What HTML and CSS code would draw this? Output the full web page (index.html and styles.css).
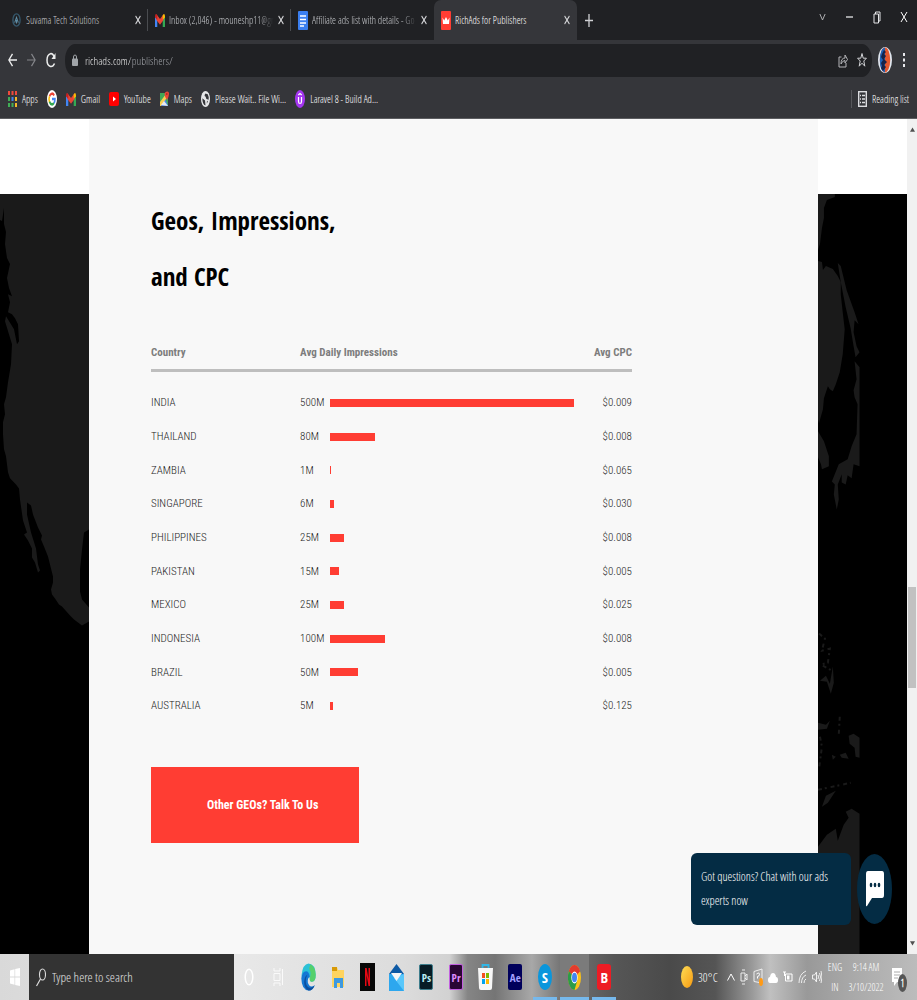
FILE: index.html
```html
<!DOCTYPE html>
<html lang="en">
<head>
<meta charset="utf-8">
<meta name="viewport" content="width=device-width, initial-scale=1">
<title>RichAds for Publishers</title>
<link rel="stylesheet" href="styles.css">
</head>
<body>
<svg class="defs" width="0" height="0" aria-hidden="true">
  <symbol id="close" viewBox="0 0 10 10" preserveAspectRatio="none"><path d="M1 1l8 8M9 1L1 9" stroke="currentColor" stroke-width="1.7" fill="none"/></symbol>
  <symbol id="close-thin" viewBox="0 0 8 12"><path d="M1 1l6 10M7 1L1 11" stroke="currentColor" fill="none"/></symbol>
  <symbol id="gmail" viewBox="0 0 24 18" preserveAspectRatio="none"><path fill="#4285f4" d="M0 3v15h5.500V7z"/><path fill="#34a853" d="M24 3v15h-5.500V7z"/><path fill="#ea4335" d="M3 0l9 7 9-7v8l-9 7-9-7z"/><path fill="#c5221f" d="M0 3q0-3 3-3l2.500 2v6L0 5z"/><path fill="#fbbc04" d="M24 3q0-3-3-3l-2.500 2v6L24 5z"/></symbol>
</svg>

<header class="browser">
  <div class="tabs">
    <div class="tab">
      <svg class="tab-icon small" viewBox="0 0 10 16" preserveAspectRatio="none"><ellipse cx="5" cy="8" rx="4" ry="7" fill="none" stroke="#35586c" stroke-width="1.500"/><path d="M3 11l2-6 2 6M5 8v4" fill="none" stroke="#5e8ba3" stroke-width="1.200"/></svg>
      <span class="tab-title">Suvama Tech Solutions</span>
      <button class="icon-button" aria-label="Close tab"><svg class="x"><use href="#close"/></svg></button>
    </div>
    <div class="tab">
      <svg class="tab-icon gm"><use href="#gmail"/></svg>
      <span class="tab-title fade">Inbox (2,046) - mouneshp11@gr</span>
      <button class="icon-button" aria-label="Close tab"><svg class="x"><use href="#close"/></svg></button>
    </div>
    <div class="tab">
      <svg class="tab-icon" viewBox="0 0 10 19" preserveAspectRatio="none"><rect width="10" height="19" rx="1" fill="#3b7ff0"/><path d="M2 5h6M2 8.500h6M2 12h6M2 15h4" stroke="#fff" stroke-width="1.600"/></svg>
      <span class="tab-title fade">Affiliate ads list with details - Go</span>
      <button class="icon-button" aria-label="Close tab"><svg class="x"><use href="#close"/></svg></button>
    </div>
    <div class="tab active">
      <svg class="tab-icon" viewBox="0 0 10 19" preserveAspectRatio="none"><rect width="10" height="19" rx="1" fill="#ff3d33"/><path d="M1.500 6.500l1.700 3L5 6l1.800 3.500 1.700-3-.5 6.500H2z" fill="#fff"/></svg>
      <span class="tab-title">RichAds for Publishers</span>
      <button class="icon-button" aria-label="Close tab"><svg class="x"><use href="#close"/></svg></button>
    </div>
    <button class="icon-button new-tab" aria-label="New tab"><svg viewBox="0 0 8 13" width="8" height="13" preserveAspectRatio="none"><path d="M4 0v13M0 6.500h8" stroke="#d0d1d4" stroke-width="1.300"/></svg></button>
    <div class="window-controls">
      <button class="icon-button" aria-label="Search tabs"><svg viewBox="0 0 8 8" width="7" height="8" preserveAspectRatio="none"><path d="M1 1l3 6 3-6" fill="none" stroke="#b5b6b9"/></svg></button>
      <button class="icon-button" aria-label="Minimize"><svg viewBox="0 0 8 8" width="7" height="8"><path d="M0 4h8" stroke="#e4e5e7" stroke-width="1.500"/></svg></button>
      <button class="icon-button" aria-label="Restore"><svg viewBox="0 0 8 13" width="8" height="13"><path d="M1 3h4.500v9H1zM2.500 3V1H7v9H5.500" fill="none" stroke="#e4e5e7"/></svg></button>
      <button class="icon-button" aria-label="Close window"><svg width="8" height="12"><use href="#close-thin"/></svg></button>
    </div>
  </div>

  <div class="toolbar">
    <button class="icon-button" aria-label="Back"><svg viewBox="0 0 10 16" width="9" height="14" preserveAspectRatio="none"><path d="M10 8H1M5 1L1 8l4 7" fill="none" stroke="#eceded" stroke-width="1.500"/></svg></button>
    <button class="icon-button" aria-label="Forward"><svg viewBox="0 0 10 16" width="9" height="14" preserveAspectRatio="none"><path d="M0 8h9M5 1l4 7-4 7" fill="none" stroke="#85868a" stroke-width="1.300"/></svg></button>
    <button class="icon-button" aria-label="Reload"><svg viewBox="0 0 10 16" width="10" height="16" preserveAspectRatio="none"><path d="M8.500 11.500Q7 15 4.500 14.500 1 13.500 1 8t4-6.500Q7 1.500 8.500 5.500" fill="none" stroke="#eceded" stroke-width="1.500"/><path d="M9.500 1v6H5.500z" fill="#eceded"/></svg></button>
    <div class="omnibox">
      <svg viewBox="0 0 6 12" width="6" height="12"><rect y="4.500" width="6" height="7.500" rx="1" fill="#a0a4a8"/><path d="M1.500 5V3q0-2 1.500-2t1.500 2v2" fill="none" stroke="#a0a4a8"/></svg>
      <input class="url" type="text" value="richads.com/publishers/" aria-label="Address">
      <button class="icon-button" aria-label="Share"><svg viewBox="0 0 10 16" width="10" height="16"><path d="M3.500 5H1v10h7v-4M3 12q0-6 4-6V3l2.500 4.500L7 11V8.500Q4.500 8.500 3 12z" fill="none" stroke="#b4b5b8"/></svg></button>
      <button class="icon-button" aria-label="Bookmark"><svg viewBox="0 0 10 16" width="10" height="16"><path d="M5 1.500l1.200 4.700h3.200L6.800 9l1 5.200L5 11.200l-2.800 3 1-5.200L.6 6.200h3.200z" fill="none" stroke="#d0d1d4"/></svg></button>
    </div>
    <button class="icon-button" aria-label="Profile"><svg viewBox="0 0 14 26" width="14" height="26"><ellipse cx="7" cy="13" rx="7" ry="13" fill="#dfe6ee"/><ellipse cx="7" cy="13" rx="5.200" ry="12.500" fill="#e4572e"/><path d="M7 .5Q1.800 2 1.800 13T7 25.500z" fill="#1d63b8"/><path d="M6 3l2 2-2 2 2 2-2 3 3 3-3 3 2 2-3 4-2-3 1-2-1-3 2-3-2-3 1-3z" fill="#182348"/></svg></button>
    <button class="icon-button dots" aria-label="Menu"><svg viewBox="0 0 4 16" width="4" height="16"><path d="M1 1h2v3H1zM1 6.500h2v3H1zM1 12h2v3H1z" fill="#e8e9ec"/></svg></button>
  </div>

  <nav class="bookmarks" aria-label="Bookmarks">
    <a href="#apps"><svg viewBox="0 0 9 16" width="9" height="16"><path d="M0 0h2v4H0zM3.500 0h2v4h-2zM7 0h2v4H7z" fill="#f04a3c"/><path d="M0 6h2v4H0z" fill="#41ad56"/><path d="M3.500 6h2v4h-2z" fill="#3e82ec"/><path d="M7 6h2v4H7z" fill="#f4b92a"/><path d="M0 12h2v4H0zM3.500 12h2v4h-2z" fill="#41ad56"/><path d="M7 12h2v4H7z" fill="#f4b92a"/></svg>Apps</a>
    <a href="#google" aria-label="Google"><svg viewBox="0 0 20 20" width="10" height="18" preserveAspectRatio="none"><circle cx="10" cy="10" r="10" fill="#fff"/><g fill="none" stroke-width="3"><path d="M14.500 6A6 6 0 0 0 5 7" stroke="#ea4335"/><path d="M5 7a6 6 0 0 0 0 6.500" stroke="#fbbc05"/><path d="M5 13a6 6 0 0 0 9 1.500" stroke="#34a853"/><path d="M14 14.500A6 6 0 0 0 16 10h-6" stroke="#4285f4"/></g></svg></a>
    <a href="#gmail-page"><svg width="10" height="13"><use href="#gmail"/></svg>Gmail</a>
    <a href="#youtube"><svg viewBox="0 0 10 14" width="10" height="14"><rect width="10" height="14" rx="2" fill="#f00"/><path d="M4 4.500v5L7 7z" fill="#fff"/></svg>YouTube</a>
    <a href="#maps"><svg viewBox="0 0 9 16" width="9" height="16"><path d="M0 2h8v13H0z" fill="#3fa757"/><path d="M0 15l5-8 3 8z" fill="#4a86ea"/><path d="M0 11l6-8 2 2-7 10H0z" fill="#f7cf50"/><path d="M1 14l3-4 4 5z" fill="#e8eaed"/><path d="M7 9Q4.500 5 4.500 3T6.800.500 9 3t-2 6z" fill="#e84436"/><circle cx="6.800" cy="3" r=".8" fill="#8e1c16"/></svg>Maps</a>
    <a href="#wait"><svg viewBox="0 0 20 20" width="9" height="16" preserveAspectRatio="none"><circle cx="10" cy="10" r="10" fill="#e6e7e9"/><path d="M3 9l6 3 1 6q-7-1-7-9zM10 3q-4 3 0 4l2 3 5 1q1-4-2-7zM13 13l3-1-3 4z" fill="#35363a"/></svg>Please Wait.. File Wi...</a>
    <a href="#laravel"><svg viewBox="0 0 10 18" width="10" height="18"><ellipse cx="5" cy="9" rx="5" ry="9" fill="#a435f0"/><path d="M3.500 7v4.500q0 2 1.500 2t1.500-2V7M3.300 5L5 3.500 6.700 5" fill="none" stroke="#fff" stroke-width="1.200"/></svg>Laravel 8 - Build Ad...</a>
    <a class="reading" href="#reading"><svg viewBox="0 0 9 16" width="9" height="16"><rect x=".7" y=".7" width="7.600" height="14.600" fill="none" stroke="#dcdde0" stroke-width="1.400"/><path d="M2 4.500h1M4 4.500h3M2 8h1M4 8h3M2 11.500h1M4 11.500h3" stroke="#dcdde0" stroke-width="1.500"/></svg>Reading list</a>
  </nav>
</header>

<main class="viewport">
  <div class="page">
    <div class="gutter">
      <svg class="map" viewBox="0 0 89 759" preserveAspectRatio="none"><path fill="#1a1a1a" d="M0 0H89V335L84 338 82 355 80 375V397L82 405 89 413V427L82 431 74 425 70 421 62 412 59 410 55 404 52 400 51 395 53 388V382L50 370 48 362 44 352 41 345 42 341 38 333 33 320 31 311 27 308V320L31 338 36 354 38 370 40 376 38 378 35 368 32 363V354L28 346 24 340 27 338 23 326 20 305 19 294 16 290 10 284 8 278 7 270 6 262 4 255 3 240V228L5 220 4 210 6 203 8 188 11 170 12 150 5 127 6 122 14 135 17 150 19 147 18 130 15 124 12 120 8 118 10 108 8 100 12 102 9 94 7 84 10 70 7 64 5 50 6 38 4 30V14L2 27 0 26Z"/></svg>
    </div>
    <section class="panel">
      <h1>Geos, Impressions,<br>and CPC</h1>
      <table class="geos">
        <thead><tr><th class="country">Country</th><th class="imp">Avg Daily Impressions</th><th class="cpc">Avg CPC</th></tr></thead>
        <tbody>
          <tr><td>INDIA</td><td><div class="meter"><span>500M</span><i style="width:100%"></i></div></td><td>$0.009</td></tr>
          <tr><td>THAILAND</td><td><div class="meter"><span>80M</span><i style="width:18.2%"></i></div></td><td>$0.008</td></tr>
          <tr><td>ZAMBIA</td><td><div class="meter"><span>1M</span><i style="width:0.4%"></i></div></td><td>$0.065</td></tr>
          <tr><td>SINGAPORE</td><td><div class="meter"><span>6M</span><i style="width:1.6%"></i></div></td><td>$0.030</td></tr>
          <tr><td>PHILIPPINES</td><td><div class="meter"><span>25M</span><i style="width:5.8%"></i></div></td><td>$0.008</td></tr>
          <tr><td>PAKISTAN</td><td><div class="meter"><span>15M</span><i style="width:3.6%"></i></div></td><td>$0.005</td></tr>
          <tr><td>MEXICO</td><td><div class="meter"><span>25M</span><i style="width:5.8%"></i></div></td><td>$0.025</td></tr>
          <tr><td>INDONESIA</td><td><div class="meter"><span>100M</span><i style="width:22.6%"></i></div></td><td>$0.008</td></tr>
          <tr><td>BRAZIL</td><td><div class="meter"><span>50M</span><i style="width:11.4%"></i></div></td><td>$0.005</td></tr>
          <tr><td>AUSTRALIA</td><td><div class="meter"><span>5M</span><i style="width:1.2%"></i></div></td><td>$0.125</td></tr>
        </tbody>
      </table>
      <a class="cta" href="#contact">Other GEOs? Talk To Us</a>
    </section>
    <div class="gutter">
      <svg class="map" viewBox="0 0 90 759" preserveAspectRatio="none"><g fill="#1a1a1a"><path d="M0 0H17V3L9 6 6 14V24L4 34 2 50 0 56Z"/><path d="M0 67L4 68 5 76 8 72 15 75 20 82 23 88V100L25 118 27 135 25 160 22 178 18 190 15 197 12 195 10 192 6 204 5 215 1 229 0 225Z"/><path d="M0 237L6 247 11 262V272L4 275 3 270 0 263Z"/><path d="M20 69L23 72 29 96 37 118 41 130 37 126 36 138 39 152 42 158 38 163 36 152 33 134 28 113 23 88Z"/><path d="M37 167L42 173V272L36 270 34 284 30 281 28 290 24 288V280L20 290 21 305 19 315 16 300 17 290 14 287 21 270 30 265 34 252 39 240 40 210 37 203 36 196 39 185Z"/><path d="M12 489L15 472 16 488 13 499 9 487 2 486 8 481Z"/><path d="M0 528L8 530 12 526 9 534 0 535ZM31 541L36 539 42 543V563L38 562 37 553 32 549ZM22 560L28 558 31 564 24 563ZM14 560L18 562 15 565ZM4 612L8 601 18 596 10 608ZM28 617L34 614 42 619V759H0V652L9 640 18 634 20 646 26 630 31 623Z"/></g><g fill="none" stroke="#1a1a1a" stroke-width="2" stroke-dasharray="4 3 2 4"><path d="M1 439L7 444 4 456 12 454 10 468 3 470 14 476M22 522L21 540M2 542L4 552 1 574M0 595L24 590 33 588"/></g></svg>
    </div>
    <div class="chat">
      <p>Got questions? Chat with our ads experts now</p>
      <button class="chat-button" aria-label="Open chat"><svg viewBox="0 0 18 36" width="18" height="36"><path d="M2 0H16Q18 0 18 3V24Q18 27 16 27H6L1 35Q0 36 0 34V3Q0 0 2 0Z" fill="#fff"/><g fill="#042c44"><ellipse cx="5" cy="14" rx="1.300" ry="2.200"/><ellipse cx="9" cy="14" rx="1.300" ry="2.200"/><ellipse cx="13" cy="14" rx="1.300" ry="2.200"/></g></svg></button>
    </div>
  </div>
  <div class="scrollbar"><svg viewBox="0 0 6 6" width="5" height="6"><path d="M0 5l3-5 3 5z" fill="#505050"/></svg><div class="track"><div class="thumb"></div></div><svg viewBox="0 0 6 6" width="5" height="6"><path d="M0 1l3 5 3-5z" fill="#505050"/></svg></div>
</main>

<footer class="taskbar">
  <button class="start" aria-label="Start"><svg viewBox="0 0 10 18" width="10" height="18"><path d="M0 2.500L4.500 1.300V8.500H0zM5.200 1L10 0V8.500H5.200zM0 9.500H4.500V16.700L0 15.500zM5.200 9.500H10V18L5.200 17z" fill="#fff"/></svg></button>
  <label class="search"><svg viewBox="0 0 10 19" width="10" height="19"><ellipse cx="6.500" cy="6.500" rx="3" ry="5.500" fill="none" stroke="#dedede" stroke-width="1.100"/><path d="M4.500 11L.5 18" stroke="#dedede" stroke-width="1.200"/></svg><input type="text" placeholder="Type here to search" aria-label="Type here to search"></label>
  <div class="apps">
    <button aria-label="Cortana"><svg viewBox="0 0 10 18" width="10" height="18"><ellipse cx="5" cy="9" rx="3.800" ry="7.800" fill="none" stroke="#fff" stroke-width="1.500"/></svg></button>
    <button aria-label="Task view"><svg viewBox="0 0 11 18" width="11" height="18"><path d="M1 0v3h6V0M1 18v-3h6v3M1 5.500h6v7H1zM9.500 1v16" fill="none" stroke="#fafafa"/></svg></button>
    <button aria-label="Edge"><svg viewBox="0 0 24 24" width="15" height="28" preserveAspectRatio="none"><path d="M1 10Q3 1 12 .5 23 1 23.500 10q0 6-6 6-4 0-3.500-3L10 8Q4 7 1 12z" fill="#2bc1d6"/><path d="M15 1q8 2 8.500 9 0 6-6 6-4 0-3.500-3 3-5-1-8z" fill="#55d06b"/><path d="M.5 13Q2 7 8 7q5 0 6 5-4 1-3 5 3 5 11 2-4 5-10 4.500Q1 23 .5 13z" fill="#1478d4"/><path d="M10 10q-5 6 0 10 5 3 12-1-4 5-10 4.500Q5 22 5 16q1-5 5-6z" fill="#0d4f9e"/></svg></button>
    <button aria-label="File Explorer"><svg viewBox="0 0 14 23" width="14" height="23"><path d="M1 1h5l1 3h6v17H1z" fill="#ffd45f"/><path d="M1 1h5v4H1z" fill="#d89a08"/><path d="M3 12h9v10H9v-5H6v5H3z" fill="#3e99e0"/></svg></button>
    <button aria-label="Netflix"><svg viewBox="0 0 15 28" width="15" height="28"><path d="M0 0h15v28H0z" fill="#080808"/><path d="M5 5h1.700l1.800 11V5H10v18H8.500L6.500 12v11H5z" fill="#e50914"/></svg></button>
    <button aria-label="Mail"><svg viewBox="0 0 15 27" width="15" height="27"><path d="M0 10L7.500 0 15 10v4H0z" fill="#0c59a4"/><path d="M0 10h15v17H0z" fill="#2da7ee"/><path d="M15 10v17L5 14z" fill="#58c7fb"/><path d="M2 9h11L7.500 17z" fill="#f5f5f5"/></svg></button>
    <button aria-label="Photoshop"><span class="adobe ps">Ps</span></button>
    <button aria-label="Premiere Pro"><span class="adobe pr">Pr</span></button>
    <button aria-label="Store"><svg viewBox="0 0 15 28" width="15" height="28"><path d="M4.500 7V2h6v5" fill="none" stroke="#30b6e6" stroke-width="1.800"/><path d="M0 5h15l-1 20q0 2-2 2H3q-2 0-2-2z" fill="#f7f7f7"/><path d="M4 10h3v5H4z" fill="#f25022"/><path d="M8 10h3v5H8z" fill="#7fba00"/><path d="M4 16h3v5H4z" fill="#00a4ef"/><path d="M8 16h3v5H8z" fill="#ffb900"/></svg></button>
    <button aria-label="After Effects"><span class="adobe ae">Ae</span></button>
    <button class="running" aria-label="Skype"><span class="round skype">S</span></button>
    <button class="running current" aria-label="Chrome"><svg viewBox="0 0 24 24" width="13" height="25" preserveAspectRatio="none"><circle cx="12" cy="12" r="12" fill="#fbc116"/><path d="M12 12L1.600 6A12 12 0 0 1 22.400 6z" fill="#e33b2e"/><path d="M12 12L1.600 6A12 12 0 0 0 12 24l5-9z" fill="#2b9c48"/><circle cx="12" cy="12" r="5.800" fill="#fff"/><circle cx="12" cy="12" r="4.600" fill="#4285f4"/></svg></button>
    <button class="running" aria-label="B"><span class="round b">B</span></button>
  </div>
  <div class="tray">
    <svg class="sun" viewBox="0 0 12 22" width="12" height="22"><defs><linearGradient id="sun" x2="1" y2="1"><stop stop-color="#ffdd55"/><stop offset="1" stop-color="#f59a12"/></linearGradient></defs><ellipse cx="6" cy="11" rx="6" ry="11" fill="url(#sun)"/></svg>
    <span class="temp">30°C</span>
    <svg viewBox="0 0 8 8" width="8" height="8"><path d="M.5 7.500L4 1l3.500 6.500" fill="none" stroke="#fff"/></svg>
    <svg viewBox="0 0 8 16" width="8" height="16"><path d="M1 4h4v8H1zM5 7l2-2v6L5 9M2 1h3M2 15h3" fill="none" stroke="#eee"/></svg>
    <svg viewBox="0 0 10 18" width="10" height="18"><path d="M1 3.500L9 1v14l-8-1.500z" fill="none" stroke="#eee"/><path d="M3.500 6q3-2 3 .500 0 1.500-2 2v2" fill="none" stroke="#fff"/><ellipse cx="8" cy="14" rx="2" ry="4" fill="#ff9a16"/></svg>
    <svg viewBox="0 0 10 11" width="10" height="11"><path d="M2 11Q0 11 0 8t2-3q.5-4 3-4t3 4q2 0 2 3t-2 3z" fill="#fff"/></svg>
    <svg viewBox="0 0 10 12" width="10" height="12"><path d="M2.500 3H9v7H2.500zM0 1h3M1.500 1v4" fill="none" stroke="#fff"/><path d="M4 4.500h2.500v4H4z" fill="#fff"/></svg>
    <svg viewBox="0 0 9 14" width="9" height="14"><path d="M1 13Q1 4 8 1M3.500 13Q3.500 7 8 5M6 13q0-3 2-4" fill="none" stroke="#eee"/></svg>
    <svg viewBox="0 0 10 14" width="10" height="14"><path d="M.5 5h2L4.500 2v10l-2-3h-2zM6 5q1 2 0 4M7.500 3q2 4 0 8M9 1q2 6 0 12" fill="none" stroke="#eee"/></svg>
    <span class="stack lang"><span>ENG</span><span>IN</span></span>
    <span class="stack clock"><span>9:14 AM</span><span>3/10/2022</span></span>
    <button class="notice" aria-label="Notifications"><svg viewBox="0 0 11 18" width="11" height="18"><path d="M0 0h10v14H5l-3 4v-4H0z" fill="#fff"/><path d="M2 4h6M2 7h6M2 10h4" stroke="#aaa"/></svg><b>1</b></button>
  </div>
</footer>
</body>
</html>
```

FILE: styles.css
```css
:root {
  --heading: "Open Sans Condensed", "Roboto Condensed", "Open Sans", sans-serif;
  --ui: "Open Sans Condensed Light", "Roboto Condensed", "Liberation Sans Narrow", sans-serif;
  --copy: "Roboto Condensed", "Liberation Sans Narrow", Roboto, sans-serif;
}
* { box-sizing: border-box; }
body {
  margin: 0;
  min-height: 100vh;
  display: flex;
  flex-direction: column;
  font-family: var(--ui);
  font-size: 10px;
}
svg { display: block; flex: none; }
.defs { position: absolute; }
button { border: 0; padding: 0; background: none; color: inherit; font: inherit; }
a { color: inherit; text-decoration: none; }
input { border: 0; padding: 0; background: none; font: inherit; min-width: 0; outline: 0; }
.icon-button { display: flex; align-items: center; justify-content: center; flex: none; }

.browser { background: #35363a; color: #fff; border-bottom: 1px solid #5c5d60; }
.tabs { display: flex; height: 40px; background: #202124; padding-left: 5px; }
.tab {
  flex: 0 1 143px;
  min-width: 0;
  display: flex;
  align-items: center;
  gap: 4px;
  padding: 0 7px;
  color: #c4c6ca;
  background: linear-gradient(#4a4c50, #4a4c50) right center / 1px 22px no-repeat;
}
.tab:nth-child(3) { background: none; }
.tab.active { background: #35363a; color: #fff; border-radius: 7px 7px 0 0; }
.tab-icon { width: 10px; height: 19px; }
.tab-icon.small { width: 9px; height: 14px; margin-right: 1px; }
.tab-icon.gm { height: 13px; }
.tab-title { flex: 1; overflow: hidden; white-space: nowrap; }
.fade { mask-image: linear-gradient(to right, #000 85%, transparent); }
.x { width: 6px; height: 10px; color: #d6d7da; }
.new-tab { width: 24px; }
.window-controls { margin-left: auto; display: flex; }
.window-controls .icon-button { width: 27px; height: 34px; }

.toolbar { display: flex; align-items: center; height: 40px; padding: 0 11px 0 8px; gap: 10px; }
.omnibox {
  flex: 1;
  display: flex;
  align-items: center;
  gap: 7px;
  height: 33px;
  margin: 0 -4px 0 -1px;
  padding: 0 4px 0 7px;
  border-radius: 10px / 16px;
  background: #202124;
}
.url {
  flex: 1;
  font-size: 11px;
  color: transparent;
  background: linear-gradient(to right, #fff 45px, #a6a9ae 45px);
  background-clip: text;
}
.omnibox .icon-button { width: 12px; }
.dots { width: 4px; }

.bookmarks { display: flex; align-items: center; gap: 9px; height: 38px; padding: 0 8px; white-space: nowrap; }
.bookmarks a { display: flex; align-items: center; gap: 5px; }
.bookmarks .reading { margin-left: auto; border-left: 1px solid #56575b; height: 18px; padding-left: 6px; }

.viewport { flex: 1; display: flex; background: #f1f1f1; }
.page {
  flex: 1;
  position: relative;
  display: grid;
  grid-template-columns: 89px 1fr 89px;
  background: linear-gradient(#fff 75px, #000 75px);
}
.gutter { position: relative; margin-top: 75px; }
.map { position: absolute; width: 100%; height: 100%; }
.panel { background: #f8f8f8; padding: 73px 62px 100px; font-family: var(--copy); }
.panel h1 { margin: 0; font: bold 25px/56px var(--heading); color: #000; }
.geos { width: 79.5%; margin-top: 26px; border-collapse: collapse; table-layout: fixed; font-size: 11px; color: #1c1c1c; }
.geos th { height: 40px; padding: 6px 0 0; text-align: left; color: #7d7d7d; border-bottom: 3px solid #bebebe; }
.geos .country { width: 31%; }
.geos .imp { width: 57%; }
.geos th:last-child, .geos td:last-child { text-align: right; }
.geos td { height: 34px; padding: 0; font-weight: 300; }
.geos tr:nth-child(3n) td { height: 33px; }
.geos tbody::before { content: ""; display: block; height: 14px; }
.meter { display: grid; grid-template-columns: 30px 1fr; align-items: center; }
.meter i { height: 8px; background: #ff3d33; }
.cta {
  display: flex;
  align-items: center;
  width: 208px;
  height: 76px;
  margin-top: 44px;
  padding-left: 56px;
  background: #ff3d33;
  color: #fff;
  font-size: 12px;
  font-weight: bold;
}
.chat {
  position: absolute;
  right: 15px;
  bottom: 29px;
  display: flex;
  align-items: center;
  gap: 6px;
  color: #fff;
  font-size: 12px;
  line-height: 24px;
}
.chat p { width: 160px; margin: 0; padding: 12px 10px; border-radius: 6px; background: #042c44; }
.chat-button { width: 35px; height: 70px; border-radius: 50%; background: #042c44; display: grid; place-items: center; }
.scrollbar { width: 10px; display: flex; flex-direction: column; align-items: center; padding: 8px 0; }
.track { flex: 1; display: flex; flex-direction: column; }
.track::before { content: ""; flex: 9; }
.track::after { content: ""; flex: 5; }
.thumb { width: 8px; height: 101px; background: #c1c1c1; }

.taskbar {
  display: flex;
  flex: none;
  height: 46px;
  color: #fff;
  background: linear-gradient(to right, #d9d9d9 0, #e8e8e8 26%, #dcdcdc 44%, #d2d2d2 49%, #858585 51%, #757575 54%, #a8a8a8 58%, #777 61%, #565656 67%, #4a4a4a 73%, #555 78%, #999 82%, #c0c0c0 84%, #999 88%, #acacac 94%, #bcbcbc 100%);
}
.start { width: 29px; display: grid; place-items: center; }
.search { width: 205px; display: flex; align-items: center; gap: 6px; padding-left: 7px; background: #333; }
.search input { flex: 1; font-size: 13px; color: #fff; }
.search input::placeholder { color: #e0e0e0; opacity: 1; }
.apps { width: 385px; display: grid; grid-template-columns: repeat(13, 1fr); }
.apps button { display: grid; place-items: center; }
.apps .running { background: linear-gradient(#76b9ed, #76b9ed) center bottom / 24px 3px no-repeat; }
.apps .current { background: linear-gradient(#76b9ed, #76b9ed) center bottom / 100% 3px no-repeat #7b7b7b; }
.adobe { display: grid; place-items: center; width: 14px; height: 26px; border-radius: 2px; font: bold 11px var(--heading); }
.ps { background: #071c26; border: 1px solid #3d7d8c; color: #b9ecf5; }
.pr { background: #2a0634; border: 1px solid #c25fe0; color: #df8cff; }
.ae { background: #00005b; color: #a5a0ff; }
.round { display: grid; place-items: center; width: 14px; height: 26px; border-radius: 50%; font: bold 15px var(--heading); }
.skype { background: #0a96dc; }
.b { background: #ed1c24; border-radius: 3px; }
.tray { margin-left: auto; display: flex; align-items: center; gap: 5px; padding-right: 10px; }
.temp { width: 24px; font-size: 12px; }
.stack { display: grid; line-height: 20px; text-align: center; }
.lang { width: 16px; }
.clock { width: 36px; margin-right: 3px; }
.notice { position: relative; width: 15px; height: 30px; }
.notice b { position: absolute; right: 0; bottom: 0; width: 9px; height: 18px; line-height: 18px; border-radius: 50%; background: #555; }
```
